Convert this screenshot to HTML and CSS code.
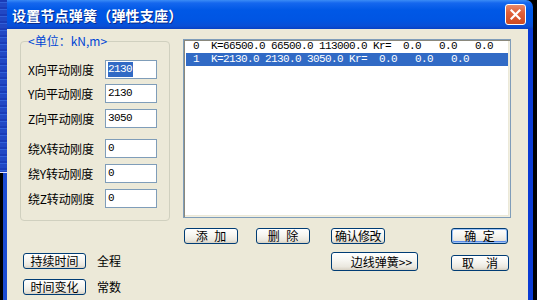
FILE: index.html
```html
<!DOCTYPE html>
<html lang="zh-CN">
<head>
    <meta charset="UTF-8">
    <title>设置节点弹簧（弹性支座）</title>
    <link rel="stylesheet" href="styles.css">
</head>
<body>
    <!-- desktop behind the dialog -->
    <div class="edge">
        <div class="edge-top"></div>
        <div class="edge-bottom"></div>
    </div>

    <div class="window">
        <div class="titlebar">
            <span class="title">设置节点弹簧（弹性支座）</span>
            <button class="close-button">
                <svg width="11" height="11" viewBox="0 0 11 11"><path d="M1.5 1.5 L9.5 9.5 M9.5 1.5 L1.5 9.5" stroke="#fff" stroke-width="2.2" stroke-linecap="square"/></svg>
            </button>
        </div>

        <div class="client">
            <div class="top">
                <fieldset class="group">
                    <legend>&lt;单位：kN,m&gt;</legend>
                    <div class="field-row">
                        <span class="label">X向平动刚度</span>
                        <div class="field"><span class="sel">2130</span></div>
                    </div>
                    <div class="field-row">
                        <span class="label">Y向平动刚度</span>
                        <div class="field">2130</div>
                    </div>
                    <div class="field-row">
                        <span class="label">Z向平动刚度</span>
                        <div class="field">3050</div>
                    </div>
                    <div class="field-row gap">
                        <span class="label">绕X转动刚度</span>
                        <div class="field">0</div>
                    </div>
                    <div class="field-row">
                        <span class="label">绕Y转动刚度</span>
                        <div class="field">0</div>
                    </div>
                    <div class="field-row">
                        <span class="label">绕Z转动刚度</span>
                        <div class="field">0</div>
                    </div>
                </fieldset>

                <div class="list">
                    <div class="list-row">0  K=66500.0 66500.0 113000.0 Kr=  0.0   0.0   0.0</div>
                    <div class="list-row selected">1  K=2130.0 2130.0 3050.0 Kr=  0.0   0.0   0.0</div>
                </div>
            </div>

            <div class="btn-row">
                <button class="btn spaced add">添 加</button>
                <button class="btn spaced del">删 除</button>
                <button class="btn edit">确认修改</button>
                <button class="btn spaced ok">确 定</button>
            </div>

            <div class="bottom">
                <div class="opts">
                    <div class="opt">
                        <button class="btn opt-btn">持续时间</button>
                        <span class="opt-value">全程</span>
                    </div>
                    <div class="opt">
                        <button class="btn opt-btn">时间变化</button>
                        <span class="opt-value">常数</span>
                    </div>
                </div>
                <div class="actions">
                    <button class="btn edge-spring">边线弹簧&gt;&gt;</button>
                    <button class="btn cancel">取　消</button>
                </div>
            </div>
        </div>
    </div>

    <div class="shadow"></div>
</body>
</html>
```

FILE: styles.css
```css
* {
    box-sizing: border-box;
}

body {
    margin: 0;
    width: 537px;
    height: 300px;
    overflow: hidden;
    display: flex;
    background-color: #000;
    font-family: "Noto Sans CJK SC", "Liberation Sans", sans-serif;
    font-size: 12px;
    color: #000;
}

/* left strip of desktop */
.edge {
    width: 7px;
    display: flex;
    flex-direction: column;
}

.edge-top {
    height: 172px;
    background-color: #2148c4;
    background-image: repeating-linear-gradient(180deg, #1a3cb8 0 2px, #3160d8 2px 3px, #2148c4 3px 7px);
}

.edge-bottom {
    flex: 1;
    border-top: 1px solid #e8e8ff;
    background: linear-gradient(90deg, #000 0 3px, #1c4cd2 3px);
}

/* dialog window */
.window {
    width: 526px;
    display: flex;
    flex-direction: column;
}

.titlebar {
    height: 29px;
    display: flex;
    align-items: center;
    justify-content: space-between;
    padding: 0 7px 0 5px;
    border-top-right-radius: 7px;
    background: linear-gradient(180deg, #3b8cf6 0, #1567ee 3px, #0058e6 10px, #0055e3 20px, #0a4fd6 26px, #0840c4 29px);
}

.title {
    color: #fff;
    font-size: 14px;
    font-weight: bold;
    letter-spacing: 0.2px;
    text-shadow: 1px 1px #0b2b8a;
}

.close-button {
    width: 21px;
    height: 21px;
    padding: 0;
    display: flex;
    align-items: center;
    justify-content: center;
    border: 1px solid #fff;
    border-radius: 3px;
    background: linear-gradient(180deg, #e98a6a 0, #e0603a 40%, #cd4a22 100%);
}

.client {
    flex: 1;
    background-color: #ece9d8;
    border-right: 5px solid #0a3bd3;
    padding: 5px 0 0 13px;
}

.top {
    display: flex;
    align-items: flex-start;
}

/* group box with the six stiffness fields */
.group {
    width: 150px;
    height: 187px;
    margin: 0;
    padding: 12px 7px 0 7px;
    min-width: 0;
    border: 1px solid #d0d0bf;
    border-radius: 4px;
}

.group legend {
    padding: 0;
    line-height: 14px;
    color: #0046d5;
}

.field-row {
    display: flex;
    align-items: center;
    height: 19px;
    margin-top: 5px;
}

.field-row:first-of-type {
    margin-top: 0;
}

.field-row + .field-row {
    margin-top: 6px;
}

.field-row:nth-of-type(2) {
    margin-top: 5px;
}

.field-row.gap {
    margin-top: 11px;
}

.label {
    width: 77px;
    white-space: nowrap;
    letter-spacing: -0.2px;
}

.field {
    width: 52px;
    height: 19px;
    padding: 1px 0 0 2px;
    border: 1px solid #7f9db9;
    background-color: #fff;
    font-family: "Liberation Mono", monospace;
    font-size: 11px;
    letter-spacing: -0.6px;
    line-height: 15px;
}

.sel {
    display: inline-block;
    padding-right: 1px;
    background-color: #316ac5;
    color: #fff;
}

/* list of springs */
.list {
    width: 328px;
    height: 179px;
    margin: 5px 0 0 13px;
    padding: 0 2px;
    border: 1px solid #7f9db9;
    background-color: #fff;
    box-shadow: inset 1px 1px #8a887c, inset -1px -1px #f1efe2, inset -2px -2px #ece9d8;
}

.list-row {
    height: 13px;
    padding-left: 7px;
    white-space: pre;
    font-family: "Liberation Mono", monospace;
    font-size: 11px;
    letter-spacing: -0.6px;
    line-height: 13px;
}

.list-row.selected {
    background-color: #316ac5;
    color: #fff;
}

/* buttons */
.btn {
    height: 16px;
    padding: 0;
    border: 1px solid #003c74;
    border-radius: 3px;
    background: linear-gradient(180deg, #fff 0, #f6f5f0 45%, #ebe8df 80%, #d8d2c4 100%);
    font-family: "Noto Sans CJK SC", sans-serif;
    font-size: 12px;
    line-height: 14px;
    color: #000;
}

.btn.spaced {
    word-spacing: 4px;
}

.btn-row {
    display: flex;
    margin-top: 7px;
    padding-left: 164px;
}

.add {
    width: 54px;
}

.del {
    width: 54px;
    margin-left: 18px;
}

.edit {
    width: 54px;
    margin-left: 21px;
    letter-spacing: -0.5px;
}

.ok {
    width: 57px;
    margin-left: 66px;
    box-shadow: inset 0 0 0 1px #9cc2f6, inset 0 -1px 0 1px #5a8ae6;
}

.bottom {
    display: flex;
    margin-top: 8px;
}

.opts {
    width: 311px;
    padding-left: 3px;
    display: flex;
    flex-direction: column;
    gap: 9px;
}

.opt {
    display: flex;
    align-items: center;
}

.opt-btn {
    width: 63px;
}

.opt-value {
    margin-left: 11px;
}

.actions {
    display: flex;
    align-items: flex-start;
}

.edge-spring {
    width: 87px;
    height: 19px;
    padding-left: 14px;
}

.cancel {
    width: 58px;
    margin: 3px 0 0 33px;
}

.shadow {
    width: 4px;
    background-color: #000;
}
```
